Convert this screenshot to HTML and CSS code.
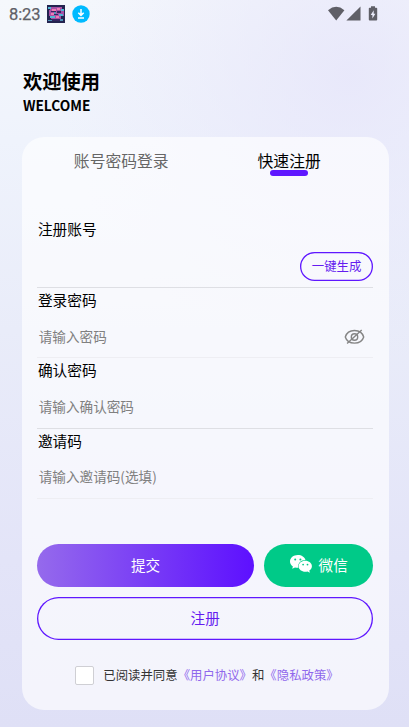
FILE: index.html
```html
<!DOCTYPE html>
<html lang="zh-CN">
<head>
<meta charset="utf-8">
<meta name="viewport" content="width=device-width, initial-scale=1">
<title>快速注册</title>
<link rel="stylesheet" href="styles.css">
</head>
<body>
<header class="status">
  <span class="clock">8:23</span>
  <svg class="app" viewBox="0 0 18 18">
    <path fill="#242450" d="M0 0h18v18H0z"/>
    <path fill="#a84fa5" d="M3 2h12v4h2v5h-3v3H4v-3H2V5h1z"/>
    <path fill="#51b8d5" d="M1 2h3v2H1zM14 4h3v2h-3zM3 11h5v2H3zM12 9h4v2h-4z"/>
    <path fill="#ed7bb4" d="M5 4h4v2H5zM10 3h3v2h-3zM4 8h3v2H4zM9 11h3v2H9z"/>
    <path fill="#352561" d="M4 6h5v1H4zM10 6h4v2h-4zM7 9h4v1H7zM5 14h8v2H5z"/>
    <path fill="#4f94b9" d="M1 15h4v1H1zM13 14h3v2h-3zM7 7h2v2H7z"/>
  </svg>
  <svg class="download" viewBox="0 0 18 18"><circle cx="9" cy="9" r="8.7" fill="#00baff"/><path d="M9 4v6M6.3 7.7 9 10.4l2.7-2.7M6 13h6" fill="none" stroke="#fff" stroke-width="1.5"/></svg>
  <svg class="signals" viewBox="0 0 52 16" fill="#5f5f67">
    <path d="M0 4.2Q8.2-2.6 16.4 4.2L8.2 14.5z"/>
    <path d="M32.5.6v14H18.4z"/>
    <path fill-rule="evenodd" d="M43 .3h4v1.4h1.3q.9 0 .9.9v11q0 .9-.9.9h-6.6q-.9 0-.9-.9v-11q0-.9.9-.9H43zM45.7 4.3l-3 4.8h1.7v3.5l3-4.9h-1.7z"/>
  </svg>
</header>
<section class="welcome">
  <h1>欢迎使用</h1>
  <p>WELCOME</p>
</section>
<main class="card">
  <nav class="tabs">
    <span class="tab">账号密码登录</span>
    <span class="tab active">快速注册</span>
  </nav>
  <form class="form">
    <div class="field strong"><label>注册账号</label><div class="entry end"><button type="button" class="generate">一键生成</button></div></div>
    <div class="field"><label>登录密码</label><div class="entry"><span>请输入密码</span>
      <svg class="eye" viewBox="0 0 20 16" fill="none" stroke="#858585" stroke-width="1.4"><path d="M.8 8C3.3-.7 16.7-.7 19.2 8 16.7 16.2 3.3 16.2.8 8z"/><circle cx="10" cy="8" r="3.2"/><path d="M2.6 14.6 17.2 1.1"/></svg></div></div>
    <div class="field strong"><label>确认密码</label><div class="entry"><span>请输入确认密码</span></div></div>
    <div class="field"><label>邀请码</label><div class="entry"><span>请输入邀请码(选填)</span></div></div>
  </form>
  <div class="actions">
    <button class="btn submit">提交</button>
    <button class="btn wechat">
      <svg viewBox="0 0 22 18"><path fill="#fff" d="M7.8 0C3.5 0 0 2.8 0 6.4c0 2 1.1 3.8 2.9 5l-.7 2.4 2.8-1.4c.9.3 1.8.4 2.8.4h.6C7.3 8.4 10.8 5 15.5 5 14.8 2.1 11.6 0 7.8 0z"/><path fill="#fff" d="M15.3 5.8c-3.7 0-6.7 2.4-6.7 5.5s3 5.5 6.7 5.5c.8 0 1.5-.1 2.2-.3l2.4 1.2-.6-2.1c1.6-1 2.6-2.5 2.6-4.3 0-3.1-2.9-5.5-6.6-5.5z"/><g fill="#00ca88"><circle cx="5.2" cy="4.4" r="1"/><circle cx="10.4" cy="4.4" r="1"/><circle cx="13.1" cy="9.6" r=".9"/><circle cx="17.5" cy="9.6" r=".9"/></g></svg>
      <span>微信</span>
    </button>
    <button class="btn register">注册</button>
  </div>
  <div class="consent"><i class="check"></i><span>已阅读并同意<a>《用户协议》</a>和<a>《隐私政策》</a></span></div>
</main>
</body>
</html>
```
FILE: styles.css
```css
* { box-sizing: border-box; }
body {
  margin: 0;
  height: 727px;
  overflow: hidden;
  font-family: "Noto Sans CJK SC", sans-serif;
  color: #000;
  background:
    radial-gradient(circle at 350px 75px, rgba(230, 229, 250, .8), rgba(230, 229, 250, 0) 290px),
    linear-gradient(180deg, #f5f8fc 0, #eff3fc 140px, #e9ecf9 330px, #e3e4f8 560px, #dfe0f6 727px);
}
h1, p { margin: 0; }
button { font-family: inherit; padding: 0; margin: 0; border: 0; }

.status { display: flex; align-items: center; height: 27px; padding: 0 29px 0 9px; }
.clock { width: 37.5px; font: 400 16.5px/20px Roboto, sans-serif; color: #5f5f67; padding-top: 2px; letter-spacing: -.1px; -webkit-text-stroke: .25px #5f5f67; }
.app { width: 18px; height: 18px; }
.download { width: 18px; height: 18px; margin-left: 7px; }
.signals { width: 52px; height: 16px; margin-left: auto; }

.welcome { height: 110px; padding: 40px 0 0 22.9px; }
.welcome h1 { font-size: 19.3px; line-height: 28px; font-weight: 700; }
.welcome p { font-size: 13.7px; line-height: 21px; font-weight: 700; }

.card {
  width: 367px;
  height: 572.5px;
  margin-left: 21.7px;
  padding: 0 15.6px;
  border-radius: 22px;
  background: rgba(255, 255, 255, .64);
}
.tabs { display: grid; grid-template-columns: 1fr 1fr; height: 80px; }
.tab { display: flex; flex-direction: column; align-items: center; font-size: 15.8px; line-height: 24px; padding-top: 12px; color: #666; }
.tab.active { color: #000; }
.tab.active::after { content: ""; width: 38px; height: 6px; margin-top: -3px; border-radius: 3px; background: #5f17ff; }

.field { height: 70.4px; border-bottom: 1px solid #eeeef3; }
.field:first-child { height: 71px; }
.field.strong { border-bottom-color: #dedfe4; }
.field label { display: block; font-size: 14.7px; line-height: 23px; padding-left: .6px; }
.entry { display: flex; align-items: center; justify-content: space-between; height: 46px; padding: 3px 8.5px 0 1.5px; font-size: 13.6px; color: #808080; }
.entry.end { justify-content: flex-end; padding: 7px 0 0; }
.generate { width: 73px; height: 29px; box-shadow: inset 0 0 0 1.3px #5f17ff; border-radius: 15px; background: transparent; color: #651cf0; font-size: 12.4px; line-height: 24px; padding-bottom: 1px; }
.eye { width: 21px; height: 16px; margin-top: 3px; }

.actions { display: grid; grid-template-columns: 216.6px 108.8px; justify-content: space-between; row-gap: 10px; margin-top: 44.8px; }
.btn { height: 43px; border-radius: 22px; font-size: 14.6px; color: #fff; padding-bottom: 2px; }
.submit { background: linear-gradient(90deg, #956aec, #5d10ff); }
.wechat { display: flex; align-items: center; justify-content: center; gap: 7px; background: #00ca88; }
.wechat svg { width: 22px; height: 18px; }
.register { grid-column: 1 / -1; box-shadow: inset 0 0 0 1.3px #5f17ff; background: transparent; color: #651cf0; }

.consent { display: flex; align-items: center; margin: 24.6px 0 0 37.5px; height: 21px; font-size: 12.4px; color: #333; white-space: nowrap; }
.check { width: 19px; height: 19px; margin-right: 9.5px; border: 1px solid #cfcfd4; border-radius: 2px; background: #fff; }
.consent a { color: #9068ec; }
```
